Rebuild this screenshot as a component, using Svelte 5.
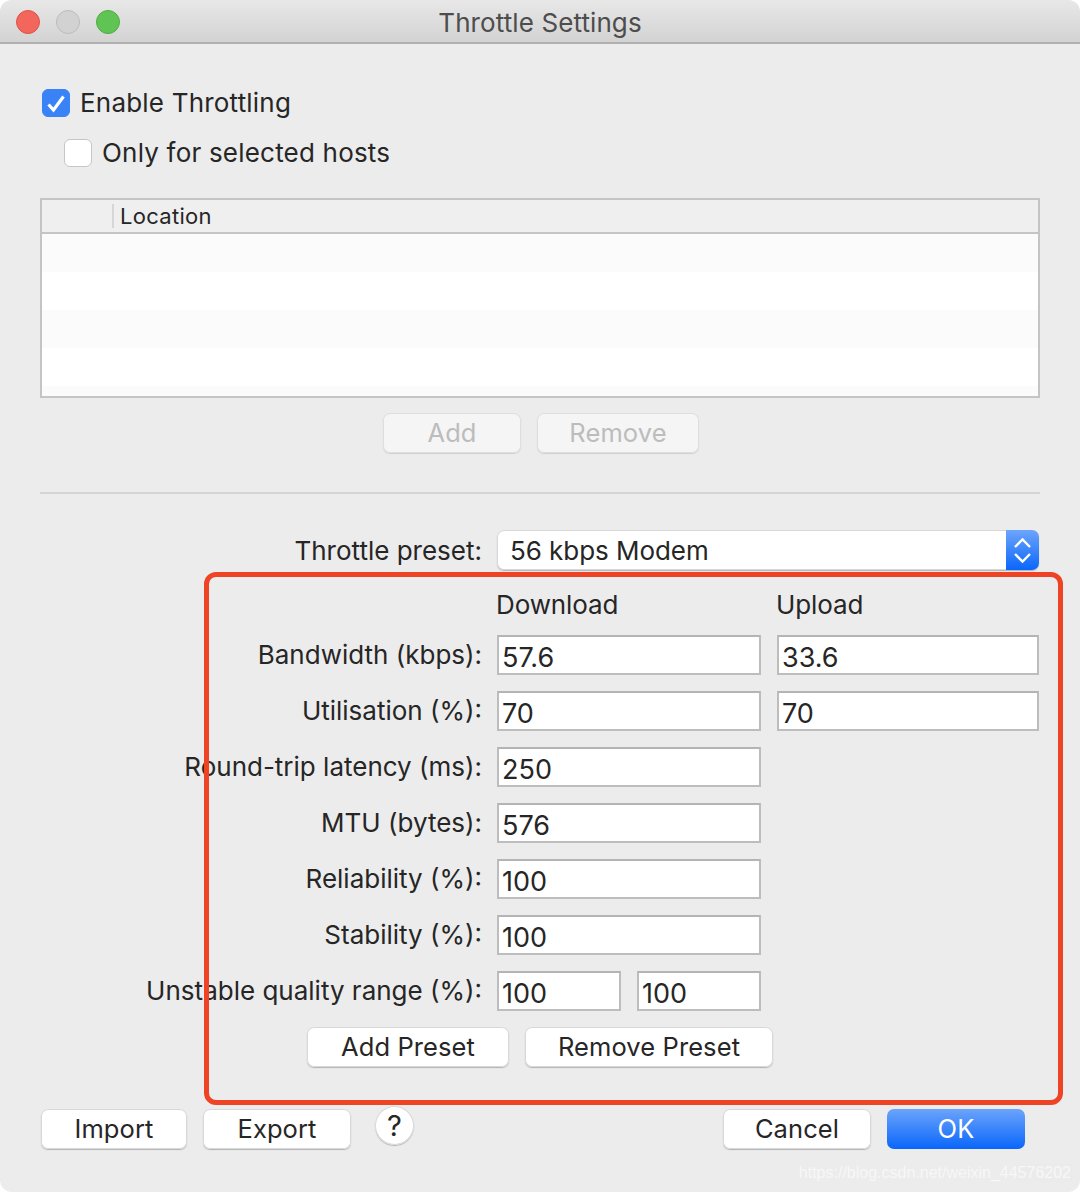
<script>
  const rows = [
    { label: 'Bandwidth (kbps):', down: '57.6', up: '33.6' },
    { label: 'Utilisation (%):', down: '70', up: '70' },
    { label: 'Round-trip latency (ms):', down: '250' },
    { label: 'MTU (bytes):', down: '576' },
    { label: 'Reliability (%):', down: '100' },
    { label: 'Stability (%):', down: '100' }
  ];
</script>

<div class="window">
  <header class="titlebar">
    <div class="lights">
      <span class="light red"></span>
      <span class="light gray"></span>
      <span class="light green"></span>
    </div>
    <span class="title">Throttle Settings</span>
  </header>

  <section class="checks">
    <label class="check">
      <span class="box on">
        <svg viewBox="0 0 28 28" width="28" height="28"><path d="M6.500 15.500l5 5.500 10-13.500" fill="none" stroke="#fff" stroke-width="3.200"/></svg>
      </span>
      <span class="check-text">Enable Throttling</span>
    </label>
    <label class="check sub">
      <span class="box"></span>
      <span class="check-text">Only for selected hosts</span>
    </label>
  </section>

  <div class="table">
    <div class="thead"><span class="cell-first"></span><span class="cell">Location</span></div>
    <div class="tbody">
      <div class="stripe"></div>
      <div class="stripe alt"></div>
      <div class="stripe"></div>
      <div class="stripe alt"></div>
      <div class="stripe last"></div>
    </div>
  </div>

  <div class="table-actions">
    <button class="btn off add">Add</button>
    <button class="btn off remove">Remove</button>
  </div>

  <hr class="divider" />

  <div class="form">
    <span class="lbl preset">Throttle preset:</span>
    <div class="select">
      <span class="select-text">56 kbps Modem</span>
      <span class="stepper">
        <svg viewBox="0 0 33 40" width="33" height="40"><path d="M9 17l7.500-7.500 7.500 7.500M9 24l7.500 7.500 7.500-7.500" fill="none" stroke="#fff" stroke-width="2.400"/></svg>
      </span>
    </div>

    <span></span>
    <span class="colhead">Download</span>
    <span class="colhead">Upload</span>

    {#each rows as r}
      <span class="lbl">{r.label}</span>
      <div class="field">{r.down}</div>
      {#if r.up}<div class="field">{r.up}</div>{:else}<span></span>{/if}
    {/each}

    <span class="lbl">Unstable quality range (%):</span>
    <div class="pair">
      <div class="field">100</div>
      <div class="field">100</div>
    </div>
    <span></span>
  </div>

  <div class="preset-actions">
    <button class="btn add-preset">Add Preset</button>
    <button class="btn remove-preset">Remove Preset</button>
  </div>

  <footer class="footer">
    <button class="btn import">Import</button>
    <button class="btn export">Export</button>
    <button class="help">?</button>
    <button class="btn cancel">Cancel</button>
    <button class="btn ok">OK</button>
  </footer>

  <div class="highlight"></div>
  <span class="watermark">https://blog.csdn.net/weixin_44576202</span>
</div>

<style>
  :global(body) {
    margin: 0;
    background: #fff;
  }
  .window {
    position: relative;
    width: 1080px;
    height: 1192px;
    box-sizing: border-box;
    overflow: hidden;
    background: #ececec;
    border-radius: 12px;
    font-family: Inter, "Liberation Sans", sans-serif;
    font-size: 26px;
    color: #262626;
  }
  .titlebar {
    position: relative;
    height: 44px;
    box-sizing: border-box;
    display: flex;
    align-items: center;
    justify-content: center;
    background: linear-gradient(#e8e8e8, #d3d3d3);
    border-bottom: 2px solid #b1b1b1;
  }
  .title {
    font-size: 26px;
    letter-spacing: 0.1px;
    color: #4d4d4d;
    margin-top: 3px;
  }
  .lights {
    position: absolute;
    left: 16px;
    top: 10px;
    display: flex;
    gap: 16px;
  }
  .light {
    width: 24px;
    height: 24px;
    box-sizing: border-box;
    border-radius: 50%;
    border: 1px solid;
  }
  .red { background: #f2665c; border-color: #dc5349; }
  .gray { background: #d2d2d2; border-color: #bcbcbc; }
  .green { background: #5fc454; border-color: #50ab46; }

  .checks {
    display: flex;
    flex-direction: column;
    gap: 22px;
    padding: 45px 0 0 42px;
  }
  .check {
    display: flex;
    align-items: center;
    gap: 10px;
    height: 28px;
    letter-spacing: 0.2px;
  }
  .check-text { margin-top: -2px; }
  .check.sub { margin-left: 22px; }
  .box {
    width: 28px;
    height: 28px;
    box-sizing: border-box;
    border-radius: 6px;
    background: #fff;
    border: 1px solid #c6c6c6;
  }
  .box.on { background: #3a83f7; border-color: #3a83f7; }
  .box svg { display: block; margin: -1px; }

  .table {
    margin: 31px 40px 0;
    height: 200px;
    box-sizing: border-box;
    border: 2px solid #c4c4c4;
    overflow: hidden;
  }
  .thead {
    display: flex;
    align-items: center;
    height: 34px;
    box-sizing: border-box;
    background: #efefef;
    border-bottom: 2px solid #c4c4c4;
    font-size: 22px;
  }
  .cell-first {
    width: 70px;
    height: 24px;
    border-right: 2px solid #d6d6d6;
  }
  .cell { padding-left: 6px; letter-spacing: 0.3px; }
  .stripe { height: 38px; background: #fbfbfb; }
  .stripe.alt { background: #fff; }
  .stripe.last { height: 10px; }

  .table-actions {
    display: flex;
    gap: 16px;
    padding: 15px 0 0 383px;
  }
  .btn {
    height: 40px;
    padding: 0 0 2px;
    box-sizing: border-box;
    border: 0;
    border-radius: 7px;
    background: #fff;
    box-shadow: inset 0 0 0 1px #d8d8d8, 0 1px 1px 0 #b4b4b4;
    font: inherit;
    font-size: 25.5px;
    color: #262626;
    letter-spacing: 0.1px;
  }
  .btn.off {
    background: #f5f5f5;
    color: #bcbcbc;
    box-shadow: inset 0 0 0 1px #dedede, 0 1px 1px 0 #d0d0d0;
  }
  .add { width: 138px; }
  .remove { width: 162px; }

  .divider {
    margin: 39px 40px 0;
    height: 2px;
    border: 0;
    background: #d4d4d4;
  }

  .form {
    display: grid;
    grid-template-columns: 441px 264px 262px;
    grid-template-rows: 40px 33px;
    grid-auto-rows: 40px;
    column-gap: 16px;
    row-gap: 16px;
    padding: 36px 0 0 40px;
  }
  .lbl {
    display: flex;
    align-items: center;
    justify-content: flex-end;
    white-space: nowrap;
    padding-bottom: 2px;
    margin-right: -1px;
  }
  .lbl.preset { padding-bottom: 0; }
  .select {
    grid-column: 2 / 4;
    display: flex;
    align-items: center;
    justify-content: space-between;
    height: 40px;
    box-sizing: border-box;
    background: #fff;
    border-radius: 7px;
    box-shadow: inset 0 0 0 1px #d8d8d8, 0 1px 1px 0 #b4b4b4;
    overflow: hidden;
    letter-spacing: -0.05px;
  }
  .select-text { padding-left: 13px; }
  .stepper {
    display: block;
    width: 33px;
    height: 40px;
    background: linear-gradient(#6da5fb, #0a66fb);
  }
  .stepper svg { display: block; }
  .colhead {
    display: flex;
    align-items: center;
    box-sizing: border-box;
    padding-top: 4px;
    margin-left: -1px;
    letter-spacing: -0.1px;
  }
  .field {
    height: 40px;
    box-sizing: border-box;
    display: flex;
    align-items: center;
    padding: 5px 0 0 3px;
    background: #fff;
    border: 2px solid #bdbdbd;
    border-top-color: #b4b4b4;
    font-size: 27px;
    letter-spacing: 0;
  }
  .pair {
    display: grid;
    grid-template-columns: 124px 124px;
    column-gap: 16px;
  }

  .preset-actions {
    display: flex;
    gap: 16px;
    padding: 16px 0 0 307px;
  }
  .add-preset { width: 202px; }
  .remove-preset { width: 248px; }

  .footer {
    display: flex;
    align-items: flex-start;
    gap: 16px;
    padding: 42px 55px 0 41px;
  }
  .import { width: 146px; }
  .export { width: 148px; }
  .help {
    width: 39px;
    height: 39px;
    margin: -3px 0 0 8px;
    padding: 0;
    border: 0;
    border-radius: 50%;
    background: #fff;
    box-shadow: inset 0 0 0 1px #d8d8d8, 0 1px 1px 0 #b4b4b4;
    font: inherit;
    font-size: 29px;
    line-height: 1;
    color: #262626;
  }
  .cancel { width: 148px; margin-left: auto; }
  .ok {
    width: 138px;
    color: #fff;
    background: linear-gradient(#6ba4fb, #0a66fb);
    box-shadow: none;
  }

  .highlight {
    position: absolute;
    left: 204px;
    top: 572px;
    width: 859px;
    height: 533px;
    box-sizing: border-box;
    border: 5px solid #ee4324;
    border-radius: 12px;
    pointer-events: none;
  }
  .watermark {
    position: absolute;
    right: 9px;
    top: 1164px;
    font-family: "Liberation Sans", sans-serif;
    font-size: 16px;
    color: #fff;
    opacity: 0.6;
  }
</style>
